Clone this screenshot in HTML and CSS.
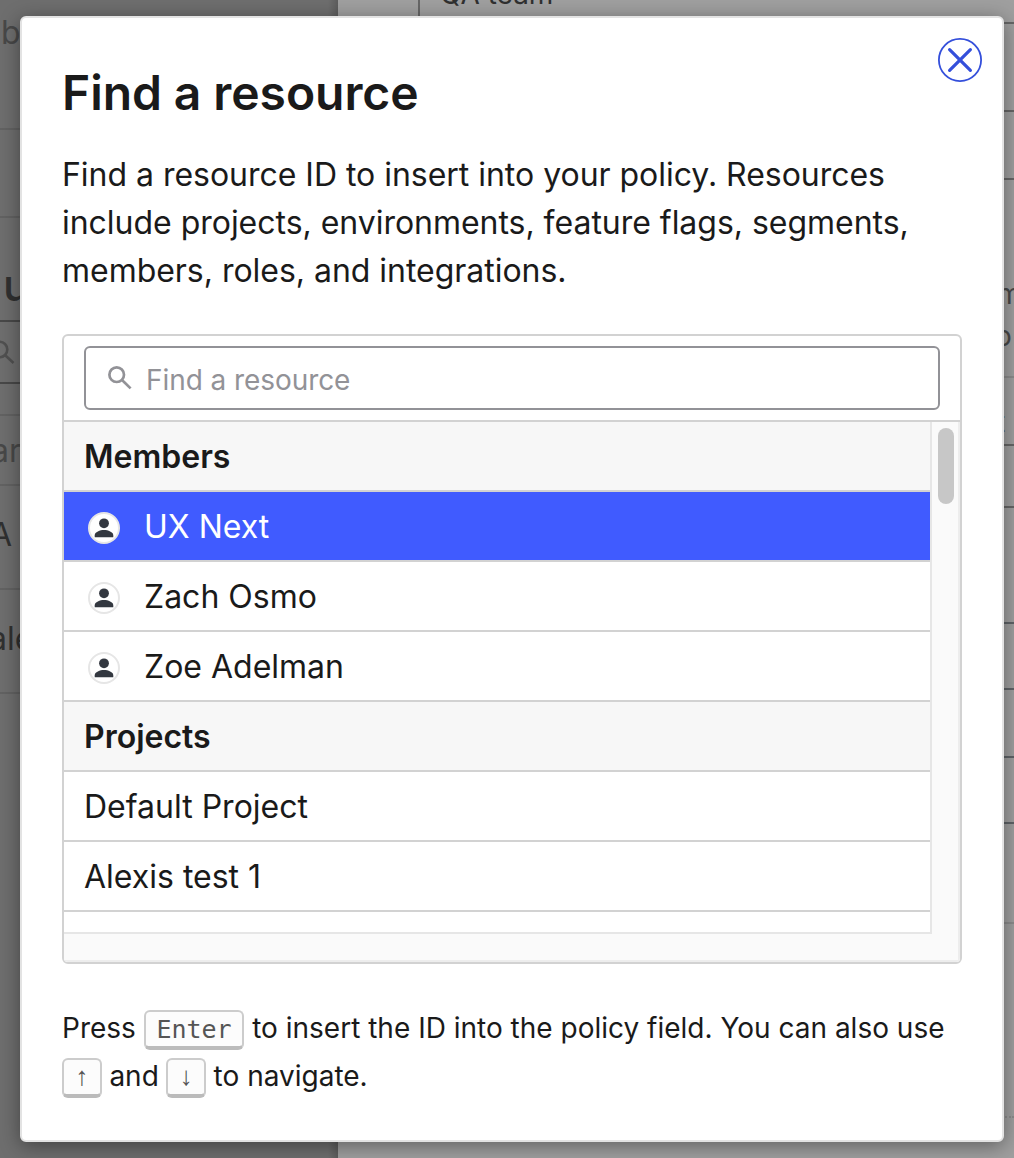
FILE: index.html
```html
<!DOCTYPE html>
<html lang="en">
<head>
<meta charset="utf-8">
<title>Find a resource</title>
<link rel="stylesheet" href="styles.css">
</head>
<body>
<div class="page">
  <aside class="sidebar">
    <div class="side-row side-row--top"><span class="side-top">b</span></div>
    <div class="side-row side-row--nav"></div>
    <div class="side-row side-row--title"><span class="side-title">u</span></div>
    <div class="side-row side-row--search">
      <svg class="side-search" viewBox="0 0 26 26"><circle cx="9.5" cy="9.5" r="7.8"/><path d="M15.5 15.5 23.5 23"/></svg>
    </div>
    <div class="side-row side-row--gap"></div>
    <div class="side-row side-row--head"><span class="side-muted">ar</span></div>
    <div class="side-row side-row--item"><span class="side-a">A</span></div>
    <div class="side-row side-row--item"><span class="side-ale">ale</span></div>
  </aside>
  <main class="content">
    <div class="main-row r1"><div class="team"><span class="team-name">QA team</span></div></div>
    <div class="main-row r2"></div>
    <div class="main-row r3"></div>
    <div class="main-row r4"><span>m</span><span class="o">o</span></div>
    <div class="main-row r5"><span>t</span></div>
    <div class="main-row r6"></div>
    <div class="main-row r7"></div>
    <div class="main-row r8"></div>
    <div class="main-row r9"></div>
    <div class="main-row r10"></div>
    <div class="main-row r11"></div>
    <div class="main-row r12"></div>
  </main>
</div>

<div class="modal" role="dialog" aria-label="Find a resource">
  <button class="close" aria-label="Close">
    <svg viewBox="0 0 44 44"><circle cx="22" cy="22" r="21.1"/><path d="M11.6 11.6 32.4 32.4M32.4 11.6 11.6 32.4"/></svg>
  </button>
  <h1 class="title">Find a resource</h1>
  <p class="intro">Find a resource ID to insert into your policy. Resources<br>include projects, environments, feature flags, segments,<br>members, roles, and integrations.</p>

  <div class="picker">
    <div class="search-wrap">
      <div class="search">
        <svg class="search-icon" viewBox="0 0 24 24"><circle cx="8.7" cy="8.7" r="7.3"/><path d="M14 14 22.6 22.4"/></svg>
        <span class="placeholder">Find a resource</span>
      </div>
    </div>
    <div class="scroller">
      <div class="list">
        <div class="row row--group">Members</div>
        <div class="row row--selected"><svg class="avatar" viewBox="0 0 32 32"><circle class="ring" cx="16" cy="16" r="15"/><circle cx="16" cy="11.3" r="4.9"/><path d="M6.7 25.2V23.4C6.7 20 12 18.1 16 18.1S25.3 20 25.3 23.4V25.2Z"/></svg>UX Next</div>
        <div class="row"><svg class="avatar" viewBox="0 0 32 32"><circle class="ring" cx="16" cy="16" r="15"/><circle cx="16" cy="11.3" r="4.9"/><path d="M6.7 25.2V23.4C6.7 20 12 18.1 16 18.1S25.3 20 25.3 23.4V25.2Z"/></svg>Zach Osmo</div>
        <div class="row"><svg class="avatar" viewBox="0 0 32 32"><circle class="ring" cx="16" cy="16" r="15"/><circle cx="16" cy="11.3" r="4.9"/><path d="M6.7 25.2V23.4C6.7 20 12 18.1 16 18.1S25.3 20 25.3 23.4V25.2Z"/></svg>Zoe Adelman</div>
        <div class="row row--group">Projects</div>
        <div class="row">Default Project</div>
        <div class="row">Alexis test 1</div>
        <div class="row row--cut"></div>
      </div>
      <div class="track"><div class="thumb"></div></div>
      <div class="track-bottom"></div>
    </div>
  </div>

  <div class="help">
    <div class="help-line help-line--enter"><span>Press</span><kbd class="key key--enter">Enter</kbd><span>to insert the ID into the policy field. You can also use</span></div>
    <div class="help-line"><kbd class="key key--arrow">↑</kbd><span>and</span><kbd class="key key--arrow">↓</kbd><span>to navigate.</span></div>
  </div>
</div>
</body>
</html>
```
FILE: styles.css
```css
* { box-sizing: border-box; }

body {
  margin: 0;
  width: 1014px;
  height: 1158px;
  overflow: hidden;
  position: relative;
  font-family: Inter, "Liberation Sans", sans-serif;
  color: #1a1a1a;
}

.page { display: flex; width: 1014px; height: 1158px; overflow: hidden; }

/* dimmed page behind the dialog */
.sidebar {
  flex: none;
  width: 338px;
  height: 1158px;
  overflow: hidden;
  background: linear-gradient(90deg, transparent 328px, rgba(0, 0, 0, .16)), #6e6e6e;
  font-size: 32px;
  line-height: 40px;
}
.side-row { border-bottom: 2px solid #626262; display: flex; }
.side-row--top { height: 130px; padding-top: 13px; }
.side-row--nav { height: 88px; }
.side-row--title { height: 104px; padding-top: 42px; border-color: #484848; }
.side-row--search { height: 62px; padding-top: 18px; border-color: #484848; }
.side-row--gap { height: 32px; }
.side-row--head { height: 70px; padding-top: 15px; }
.side-row--item { height: 104px; padding-top: 29px; }
.side-top { color: #484848; margin-left: 1px; }
.side-title { color: #303030; font-size: 44px; font-weight: 500; line-height: 50px; margin-left: 3px; }
.side-muted { color: #484848; margin-left: -9px; }
.side-a { color: #303030; margin-left: -10px; }
.side-ale { color: #303030; margin-left: -11px; }
.side-search { width: 26px; height: 26px; margin-left: -10px; fill: none; stroke: #505050; stroke-width: 2.6; }

.content {
  flex: 1;
  min-width: 0;
  background: #9f9f9f;
  color: #494949;
  font-size: 28px;
  line-height: 42px;
}
.main-row { border-bottom: 2px solid #666; }
.r1 { height: 24px; }
.team {
  display: flex;
  align-items: flex-start;
  height: 22px;
  margin-left: 80px;
  padding-left: 20px;
  border-left: 2px solid #666;
  color: #303030;
}
.team-name { margin-top: -27px; }
.r2 { height: 88px; }
.r3 { height: 68px; }
.r4 { height: 198px; padding: 93px 0 0 659px; border-color: #8c8c8c; }
.r4 span { display: block; }
.r4 .o { margin-left: -2px; }
.r5 { height: 68px; padding: 23px 0 0 658px; }
.r6 { height: 62px; }
.r7 { height: 116px; border-color: #5f6367; }
.r8 { height: 66px; border-color: #5f6367; }
.r9 { height: 68px; border-color: #5f6367; }
.r10 { height: 66px; border-color: #5f6367; }
.r11 { height: 100px; border-color: #8c8c8c; }
.r12 { height: 194px; border-bottom-style: dotted; border-color: #8c8c8c; }

/* dialog */
.modal {
  position: absolute;
  left: 20px;
  top: 16px;
  width: 984px;
  height: 1126px;
  padding: 46px 40px 0;
  background: #fff;
  border: 2px solid #e3e3e3;
  border-radius: 6px;
  box-shadow: 0 4px 20px rgba(0, 0, 0, .4);
}
.close {
  position: absolute;
  right: 20px;
  top: 20px;
  width: 44px;
  height: 44px;
  padding: 0;
  border: 0;
  background: none;
}
.close svg { display: block; width: 44px; height: 44px; fill: none; stroke: #344fdb; }
.close circle { stroke-width: 1.8; }
.close path { stroke-width: 3.2; stroke-linecap: round; }

.title { margin: 0; font-size: 48px; line-height: 58px; font-weight: 600; letter-spacing: -.07px; white-space: nowrap; }
.intro { margin: 29px 0 39px; font-size: 32px; line-height: 48px; letter-spacing: -.025px; white-space: nowrap; }

.picker { width: 900px; height: 630px; border: 2px solid #d2d2d2; border-radius: 6px; overflow: hidden; }
.search-wrap { height: 86px; padding: 10px 20px; border-bottom: 2px solid #d2d2d2; }
.search {
  display: flex;
  align-items: center;
  gap: 14px;
  width: 856px;
  height: 64px;
  padding-left: 22px;
  border: 2px solid #929297;
  border-radius: 6px;
}
.search-icon { width: 24px; height: 24px; fill: none; stroke: #929297; stroke-width: 2.7; }
.placeholder { font-size: 28px; line-height: 34px; margin-top: 4px; letter-spacing: -.07px; color: #929297; }

.scroller { display: grid; grid-template: 512px 28px / 868px 28px; }
.list { overflow: hidden; border-right: 2px solid #e6e6e6; border-bottom: 2px solid #e6e6e6; }
.row {
  display: flex;
  align-items: center;
  height: 70px;
  padding: 1px 0 0 20px;
  border-bottom: 2px solid #d2d2d2;
  font-size: 32px;
  white-space: nowrap;
}
.row--group { background: #f7f7f7; font-weight: 600; }
.row--selected { background: #405bff; color: #fff; }
.row--cut { height: 20px; border: 0; }
.avatar { width: 32px; height: 32px; margin: 2px 24px 0 4px; fill: #333840; }
.ring { fill: #fff; stroke: #e6e6e6; stroke-width: 2; }
.track { background: #fafafa; border-right: 2px solid #ededed; padding: 6px 0 0 6px; }
.thumb { width: 16px; height: 76px; border-radius: 8px; background: #c7c7c7; }
.track-bottom { grid-column: 1 / 3; background: #fafafa; border-right: 2px solid #ededed; border-bottom: 2px solid #ededed; }

.help { margin-top: 40px; font-size: 28px; line-height: 49px; }
.help-line { display: flex; height: 48px; gap: 7.4px; white-space: nowrap; }
.help-line--enter { gap: 8.2px; }
.key {
  height: 40px;
  margin-top: 6px;
  border: 2px solid #ccc;
  border-bottom: 4px solid #bbb;
  border-radius: 6px;
  background: #fcfcfc;
  color: #555;
  font-family: "DejaVu Sans Mono", monospace;
  font-size: 25px;
  line-height: 36px;
  text-align: center;
}
.key--enter { width: 100px; }
.key--arrow { width: 40px; font-family: "Liberation Mono", monospace; font-size: 26px; line-height: 36px; }
```
